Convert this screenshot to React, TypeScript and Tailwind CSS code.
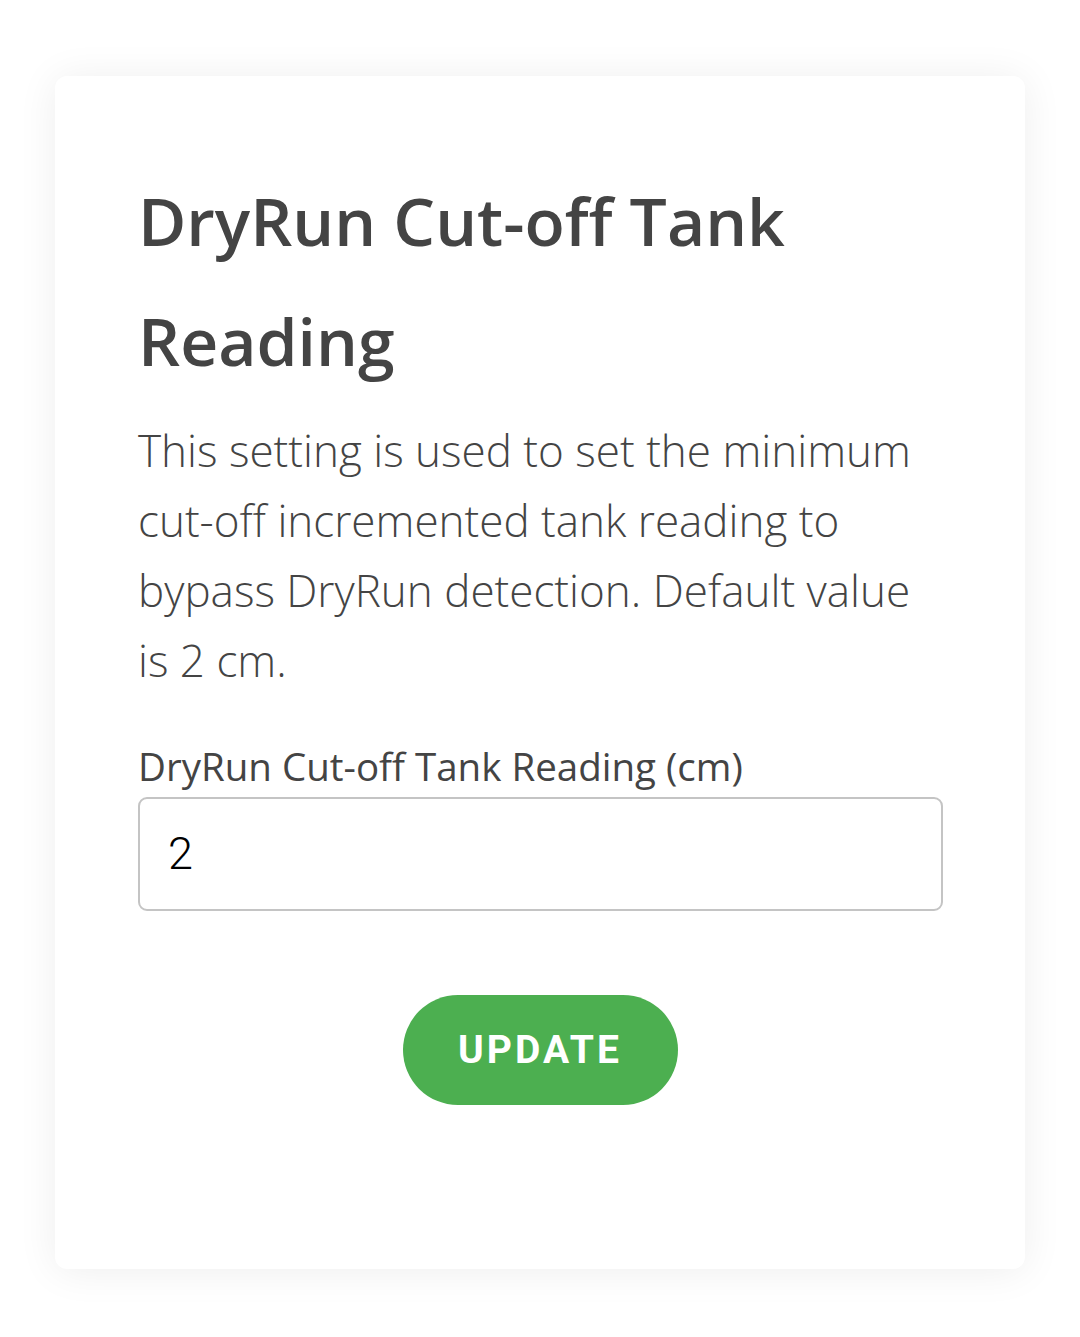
export default function App() {
  return (
    <div className="min-h-[1337px] w-[1080px] bg-white pt-[76px] px-[55px]" style={{ fontFamily: '"Open Sans", sans-serif' }}>
      <div className="h-[1193px] rounded-[12px] bg-white shadow-[0_2px_40px_rgba(0,0,0,0.07)] px-[83px] pt-[160px]">
        <h1 className="-mt-[76px] text-[66px] leading-[120px] font-semibold text-[#444444]">DryRun Cut-off Tank Reading</h1>
        <p className="mt-[15px] text-[44px] leading-[70px] font-light text-[#444444]">
          This setting is used to set the minimum cut-off incremented tank reading to bypass DryRun detection. Default value is 2 cm.
        </p>
        <label className="mt-[43px] block text-[38.5px] leading-[56px] text-[#444444]">DryRun Cut-off Tank Reading (cm)</label>
        <div className="mt-[3px] flex h-[114px] w-[805px] items-center rounded-[9px] border-2 border-[#c4c4c4] px-[28px]">
          <span className="text-[45px] font-light text-black" style={{ fontFamily: 'Roboto, sans-serif' }}>2</span>
        </div>
        <div className="mt-[84px] flex justify-center">
          <button className="flex h-[110px] w-[275px] items-center justify-center rounded-full bg-[#4caf50] text-[39px] font-bold tracking-[3px] text-white" style={{ fontFamily: 'Roboto, sans-serif' }}>
            UPDATE
          </button>
        </div>
      </div>
    </div>
  );
}
